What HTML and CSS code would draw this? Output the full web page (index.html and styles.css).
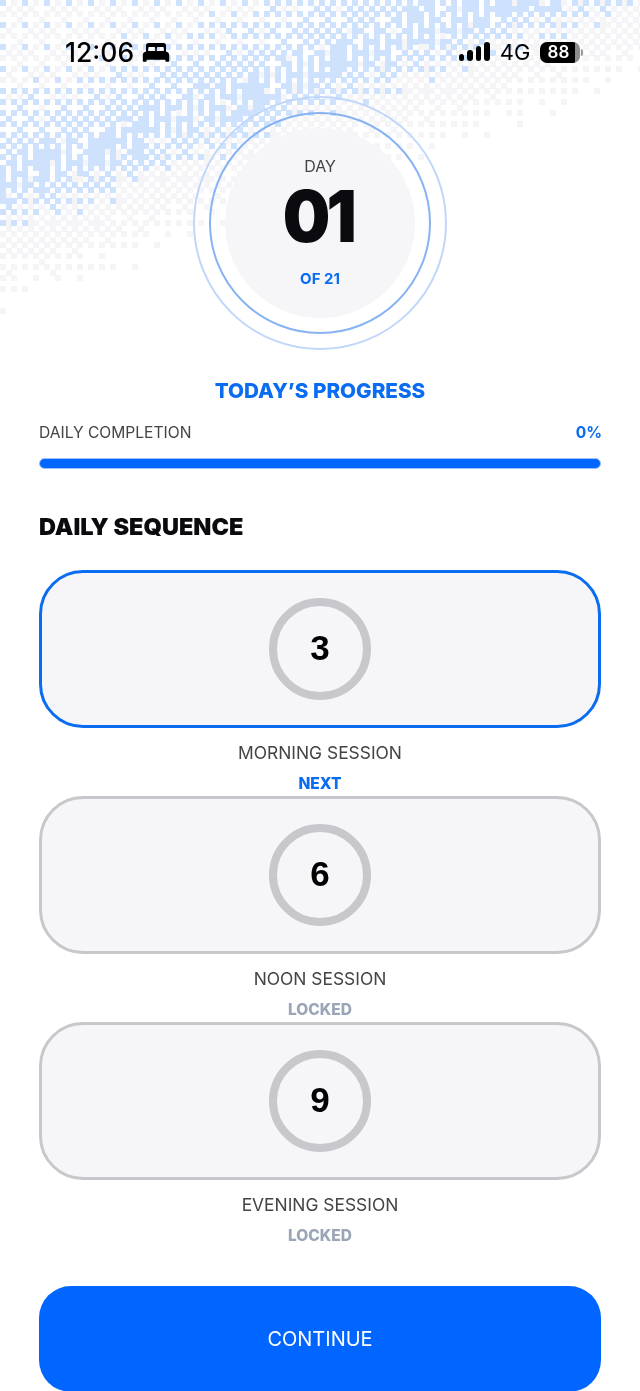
FILE: index.html
```html
<!DOCTYPE html>
<html lang="en">
<head>
    <meta charset="UTF-8">
    <meta name="viewport" content="width=device-width, initial-scale=1.0">
    <title>Daily Sequence</title>
    <link rel="stylesheet" href="styles.css">
</head>
<body>
    <canvas class="dither" id="dither" width="640" height="340"></canvas>

    <div class="page">
        <div class="status-bar">
            <div class="status-left">
                <span class="clock">12:06</span>
                <svg class="bed-icon" width="28" height="19" viewBox="0 0 28 19">
                    <path fill-rule="evenodd" fill="#000" d="M4 2.500A2.500 2.500 0 0 1 6.500 0h15A2.500 2.500 0 0 1 24 2.500v6c2 .4 3.200 1.800 3.200 3.700V18a.8.8 0 0 1-.8.8h-2.200a.8.8 0 0 1-.8-.8v-1.200H4.600V18a.8.8 0 0 1-.8.8H1.600a.8.8 0 0 1-.8-.8v-5.800c0-1.900 1.200-3.300 3.200-3.700zM6.200 5.200c0-.7.500-1.200 1.200-1.200H12c.7 0 1.200.500 1.200 1.200V8h-7zM14.800 5.200c0-.7.500-1.200 1.200-1.200h4.600c.7 0 1.200.500 1.200 1.200V8h-7z"/>
                </svg>
            </div>
            <div class="status-right">
                <div class="signal">
                    <span class="signal-bar bar-1"></span>
                    <span class="signal-bar bar-2"></span>
                    <span class="signal-bar bar-3"></span>
                    <span class="signal-bar bar-4"></span>
                </div>
                <span class="network">4G</span>
                <div class="battery"><span>88</span></div>
                <span class="battery-nub"></span>
            </div>
        </div>

        <div class="day-ring-outer">
            <div class="day-ring-inner">
                <div class="day-disc">
                    <div class="day-label">DAY</div>
                    <div class="day-number">01</div>
                    <div class="day-total">OF 21</div>
                </div>
            </div>
        </div>

        <main class="content">
            <h2 class="progress-title">TODAY’S PROGRESS</h2>
            <div class="progress-row">
                <span>DAILY COMPLETION</span>
                <span class="progress-value">0%</span>
            </div>
            <div class="progress-track"></div>

            <h2 class="sequence-title">DAILY SEQUENCE</h2>

            <div class="session">
                <div class="session-card active">
                    <div class="session-circle">3</div>
                </div>
                <div class="session-name">MORNING SESSION</div>
                <div class="session-state next">NEXT</div>
            </div>
            <div class="session">
                <div class="session-card">
                    <div class="session-circle">6</div>
                </div>
                <div class="session-name">NOON SESSION</div>
                <div class="session-state">LOCKED</div>
            </div>
            <div class="session">
                <div class="session-card">
                    <div class="session-circle">9</div>
                </div>
                <div class="session-name">EVENING SESSION</div>
                <div class="session-state">LOCKED</div>
            </div>

            <button class="continue-btn">CONTINUE</button>
        </main>
    </div>

    <script src="script.js"></script>
</body>
</html>
```

FILE: styles.css
```css
* {
    box-sizing: border-box;
}

body {
    margin: 0;
    height: 1391px;
    overflow: hidden;
    background-color: #fff;
    font-family: Inter, "Open Sans", sans-serif;
    position: relative;
}

.dither {
    position: absolute;
    top: 0;
    left: 0;
    filter: blur(0.5px);
}

.page {
    position: relative;
}

.status-bar {
    height: 96px;
    padding: 39px 57px 0 65px;
    display: flex;
    justify-content: space-between;
    align-items: flex-start;
}

.status-left {
    display: flex;
    align-items: center;
    gap: 8px;
}

.clock {
    font-family: Inter, sans-serif;
    font-size: 26.500px;
    line-height: 26px;
    font-weight: 500;
    color: #000;
}

.status-right {
    display: flex;
    align-items: center;
    height: 26px;
}

.signal {
    display: flex;
    align-items: flex-end;
    gap: 3px;
    height: 19px;
    margin-top: -2px;
}

.signal-bar {
    width: 5.500px;
    background-color: #000;
    border-radius: 3px;
}

.bar-1 { height: 7px; }
.bar-2 { height: 11px; }
.bar-3 { height: 15px; }
.bar-4 { height: 19px; }

.network {
    font-size: 22px;
    font-weight: 400;
    color: #000;
    margin-left: 10px;
    margin-right: 9.500px;
}

.battery {
    width: 40px;
    height: 21px;
    border-radius: 7px;
    background: linear-gradient(90deg, #000 88%, #8c8c8c 88%);
    color: #fff;
    font-size: 17px;
    font-weight: 600;
    display: flex;
    align-items: center;
    justify-content: center;
    padding-right: 3px;
}

.battery-nub {
    width: 2px;
    height: 7px;
    margin-left: 1px;
    background-color: #9a9a9a;
    border-radius: 0 2px 2px 0;
}

.day-ring-outer {
    width: 254px;
    height: 254px;
    margin: 0 auto;
    border: 2px solid #c0d7fa;
    border-radius: 50%;
    display: flex;
    align-items: center;
    justify-content: center;
}

.day-ring-inner {
    width: 222px;
    height: 222px;
    border: 2px solid #88b3f2;
    border-radius: 50%;
    display: flex;
    align-items: center;
    justify-content: center;
}

.day-disc {
    width: 190px;
    height: 190px;
    border-radius: 50%;
    background-color: #f6f6f9;
    display: flex;
    flex-direction: column;
    align-items: center;
}

.day-label {
    margin-top: 28px;
    font-size: 16px;
    line-height: 20px;
    color: #444;
}

.day-number {
    margin-top: 4px;
    margin-right: 4px;
    font-size: 72px;
    line-height: 72px;
    font-weight: 900;
    letter-spacing: -4px;
    color: #0b0b0f;
    transform: scaleX(0.93);
}

.day-total {
    margin-top: 17px;
    font-size: 15px;
    line-height: 20px;
    font-weight: 700;
    color: #0a6cf0;
}

.content {
    padding: 28px 39px 0;
}

.progress-title {
    margin: 0;
    text-align: center;
    font-size: 20.700px;
    line-height: 26px;
    font-weight: 800;
    color: #0a6cf0;
}

.progress-row {
    margin-top: 19px;
    display: flex;
    justify-content: space-between;
    font-size: 15.600px;
    line-height: 20px;
    color: #444;
}

.progress-value {
    margin-right: -1px;
    font-weight: 700;
    color: #0a6cf0;
}

.progress-track {
    margin-top: 15px;
    height: 11px;
    border-radius: 6px;
    background-color: #0066ff;
    border: 1px solid #9fc3f7;
}

.sequence-title {
    margin: 43px 0 0;
    font-size: 23.500px;
    line-height: 29px;
    font-weight: 900;
    color: #0b0b0f;
}

.session {
    height: 226px;
    text-align: center;
}

.sequence-title + .session {
    margin-top: 29px;
}

.session-card {
    height: 158px;
    border: 3px solid #c7c7cc;
    border-radius: 44px;
    background-color: #f6f6f9;
    display: flex;
    align-items: center;
    justify-content: center;
}

.session-card.active {
    border-color: #0a6cf0;
}

.session-circle {
    width: 102px;
    height: 102px;
    border: 8px solid #c7c7cc;
    border-radius: 50%;
    padding-bottom: 3px;
    display: flex;
    align-items: center;
    justify-content: center;
    font-family: "Liberation Sans", sans-serif;
    font-size: 35px;
    font-weight: 700;
    color: #000;
}

.session-name {
    margin-top: 14px;
    font-size: 17.400px;
    line-height: 22px;
    color: #444;
}

.session-state {
    margin-top: 10px;
    font-size: 15.500px;
    line-height: 20px;
    font-weight: 800;
    color: #9aa5b8;
}

.session-state.next {
    color: #0a6cf0;
}

.continue-btn {
    display: block;
    width: 100%;
    height: 106px;
    margin-top: 38px;
    padding: 0;
    border: none;
    border-radius: 32px;
    background-color: #0066ff;
    color: #fff;
    font-family: Inter, sans-serif;
    font-size: 20px;
}
```

FILE: script.js
```js
// Dithered blue/grey wash behind the status bar
const canvas = document.getElementById('dither');
const ctx = canvas.getContext('2d');
const CELL = 5.5;

const bayer = [
    [0, 32, 8, 40, 2, 34, 10, 42],
    [48, 16, 56, 24, 50, 18, 58, 26],
    [12, 44, 4, 36, 14, 46, 6, 38],
    [60, 28, 52, 20, 62, 30, 54, 22],
    [3, 35, 11, 43, 1, 33, 9, 41],
    [51, 19, 59, 27, 49, 17, 57, 25],
    [15, 47, 7, 39, 13, 45, 5, 37],
    [63, 31, 55, 23, 61, 29, 53, 21]
];

function clamp(v) {
    return Math.max(0, Math.min(1, v));
}

// small repeatable noise so the bands are not too regular
function noise(col, row) {
    const s = Math.sin(col * 12.9898 + row * 78.233) * 43758.5453;
    return s - Math.floor(s);
}

function blueAmount(d) {
    if (d < 0) return Math.max(0.07, 0.72 + d / 170);
    return clamp(0.72 - d / 66);
}

function greyAmount(d) {
    if (d < 0) return 0.4;
    if (d > 118) return 0;
    return d < 60 ? 0.55 : clamp(0.55 - (d - 60) / 110);
}

for (let row = 0; row < 62; row++) {
    for (let col = 0; col < 117; col++) {
        const x = col * CELL;
        const y = row * CELL;
        const d = y - (188 - 0.36 * x) + (noise(col, 3) - 0.5) * 18; // distance below the ridge
        const limit = (bayer[row % 8][col % 8] + 0.5) / 64;
        const blue = blueAmount(d);

        let isBlue;
        if (d > -30 && d < 8) {
            // tall white slots along the dense part of the band
            const key = Math.floor((row + col * 3) / 4);
            const slot = col % 2 === 1 && noise(col, key) > 0.25 && (row + col * 3) % 4 !== 0;
            isBlue = !slot && noise(col, row) > 0.08;
        } else {
            const jitter = blue > 0.15 ? (noise(col, row) - 0.5) * 0.1 : 0;
            isBlue = blue > 0 && blue + jitter > limit;
        }

        if (isBlue) {
            ctx.fillStyle = '#cfe2fd';
        } else if (greyAmount(d) > limit) {
            ctx.fillStyle = '#f5f5f8';
        } else {
            continue;
        }
        ctx.fillRect(Math.round(x), Math.round(y), 6, 6);
    }
}
```
